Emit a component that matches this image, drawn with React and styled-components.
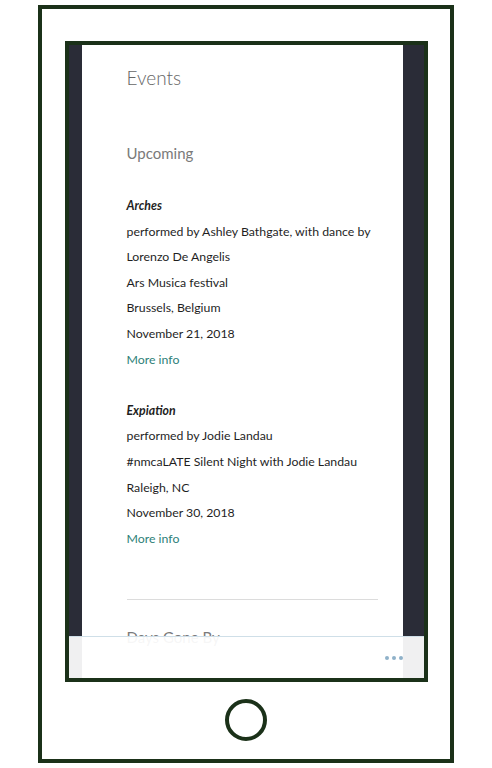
import React from "react";
import styled, { createGlobalStyle } from "styled-components";

const Global = createGlobalStyle`
  html, body { margin: 0; padding: 0; background: #ffffff; }
  body { font-family: Lato, "Open Sans", sans-serif; }
  * { box-sizing: border-box; }
`;

const FRAME = "#1b3119";

const Phone = styled.div`
  width: 416px;
  height: 758px;
  margin: 5px auto 0;
  border: 4px solid ${FRAME};
  display: flex;
  flex-direction: column;
  align-items: center;
  padding-top: 32px;
  background: #fff;
`;

const Screen = styled.div`
  position: relative;
  width: 363px;
  height: 641px;
  border: 4px solid ${FRAME};
  background: #2a2c37;
  overflow: hidden;
  display: grid;
  grid-template-columns: 13px 321px 21px;
`;

const Gutter = styled.div`
  background: #2a2c37;
`;

const Content = styled.div`
  background: #ffffff;
  padding: 21px 25px 0 45px;
`;

const PageTitle = styled.h1`
  margin: 0;
  font-size: 19px;
  line-height: 24px;
  font-weight: 300;
  color: #666666;
`;

const SectionTitle = styled.h2`
  margin: ${(p) => p.$top}px 0 0;
  font-size: 15px;
  line-height: 20px;
  font-weight: 400;
  color: #7a7a7a;
`;

const EventList = styled.div`
  margin-top: 30px;
  display: flex;
  flex-direction: column;
  gap: 25.6px;
`;

const Event = styled.div`
  display: flex;
  flex-direction: column;
`;

const Line = styled.div`
  font-size: 12.3px;
  line-height: 25.6px;
  color: #1f1f1f;
  white-space: nowrap;
`;

const EventTitle = styled(Line)`
  font-style: italic;
  font-weight: 700;
`;

const MoreInfo = styled.a`
  font-size: 12.3px;
  line-height: 25.6px;
  color: #2e7f79;
  text-decoration: none;
`;

const Divider = styled.hr`
  margin: 48px 0 0;
  border: 0;
  border-top: 1px solid #dcdcdc;
  height: 0;
`;

const BottomBar = styled.div`
  position: absolute;
  left: 0;
  right: 0;
  bottom: 0;
  height: 42px;
  border-top: 1px solid #cfdfe8;
  background: rgba(255, 255, 255, 0.93);
  display: flex;
  align-items: center;
  justify-content: flex-end;
  padding-right: 21px;
`;

const Dots = styled.div`
  display: flex;
  gap: 2.7px;
`;

const Dot = styled.span`
  width: 4px;
  height: 4px;
  border-radius: 50%;
  background: #8fb1c9;
`;

const HomeButton = styled.div`
  margin-top: 17px;
  width: 42px;
  height: 42px;
  border-radius: 50%;
  border: 4px solid ${FRAME};
`;

const events = [
  {
    title: "Arches",
    lines: [
      "performed by Ashley Bathgate, with dance by",
      "Lorenzo De Angelis",
      "Ars Musica festival",
      "Brussels, Belgium",
      "November 21, 2018",
    ],
  },
  {
    title: "Expiation",
    lines: [
      "performed by Jodie Landau",
      "#nmcaLATE Silent Night with Jodie Landau",
      "Raleigh, NC",
      "November 30, 2018",
    ],
  },
];

export default function App() {
  return (
    <>
      <Global />
      <Phone>
        <Screen>
          <Gutter />
          <Content>
            <PageTitle>Events</PageTitle>
            <SectionTitle $top={53}>Upcoming</SectionTitle>
            <EventList>
              {events.map((e) => (
                <Event key={e.title}>
                  <EventTitle>{e.title}</EventTitle>
                  {e.lines.map((l) => (
                    <Line key={l}>{l}</Line>
                  ))}
                  <MoreInfo href="#">More info</MoreInfo>
                </Event>
              ))}
            </EventList>
            <Divider />
            <SectionTitle $top={27}>Days Gone By</SectionTitle>
          </Content>
          <Gutter />
          <BottomBar>
            <Dots>
              <Dot />
              <Dot />
              <Dot />
            </Dots>
          </BottomBar>
        </Screen>
        <HomeButton />
      </Phone>
    </>
  );
}
